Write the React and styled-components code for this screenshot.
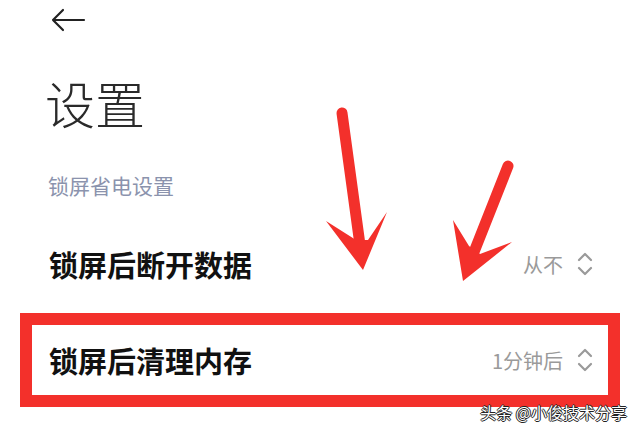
import React from 'react';
import styled, { createGlobalStyle } from 'styled-components';

const GlobalStyle = createGlobalStyle`
  body {
    margin: 0;
    background: #ffffff;
    font-family: "Noto Sans CJK SC", "Noto Sans", sans-serif;
  }
`;

const Page = styled.div`
  position: relative;
  width: 640px;
  height: 433px;
  overflow: hidden;
  background: #ffffff;
  display: flex;
  flex-direction: column;
`;

const TopBar = styled.div`
  height: 40px;
  display: flex;
  align-items: center;
  padding-left: 50px;
  color: #222;
`;

const Title = styled.h1`
  margin: 37px 0 0 45px;
  font-size: 50px;
  line-height: 50px;
  font-weight: 300;
  color: #2a2a2a;
`;

const SectionLabel = styled.div`
  margin: 48px 0 0 48px;
  font-size: 21px;
  line-height: 21px;
  color: #8b93ad;
`;

const List = styled.div`
  margin-top: 21px;
  padding: 0 20px;
  display: flex;
  flex-direction: column;
  gap: 2px;
`;

const Row = styled.div`
  height: 70px;
  display: flex;
  align-items: center;
  padding: 0 15px 0 17px;
  border: 12px solid ${p => (p.$marked ? '#f3302b' : 'transparent')};
`;

const Label = styled.div`
  flex: 1;
  font-size: 29px;
  font-weight: 700;
  color: #111;
`;

const Value = styled.div`
  display: flex;
  align-items: center;
  gap: 14px;
  font-size: 20px;
  color: #9a9a9a;
`;

const Overlay = styled.svg`
  position: absolute;
  left: 0;
  top: 0;
  pointer-events: none;
`;

const Watermark = styled.div`
  position: absolute;
  right: 13px;
  bottom: 9px;
  font-size: 16px;
  color: #ffffff;
  text-shadow: -1px 0 #222, 1px 0 #222, 0 -1px #222, 0 1px #222;
`;

function BackArrow() {
  return (
    <svg width="36" height="24" viewBox="0 0 36 24" fill="none" stroke="#222" strokeWidth="2.2" strokeLinecap="round" strokeLinejoin="round">
      <path d="M34 12H3M13 2L3 12l10 10" />
    </svg>
  );
}

function UpDown() {
  return (
    <svg width="16" height="26" viewBox="0 0 16 26" fill="none" stroke="#9a9a9a" strokeWidth="2.2" strokeLinecap="round" strokeLinejoin="round">
      <path d="M2 9l6-6 6 6M2 17l6 6 6-6" />
    </svg>
  );
}

const rows = [
  { label: '锁屏后断开数据', value: '从不' },
  { label: '锁屏后清理内存', value: '1分钟后', marked: true },
];

export default function App() {
  return (
    <Page>
      <GlobalStyle />
      <TopBar>
        <BackArrow />
      </TopBar>
      <Title>设置</Title>
      <SectionLabel>锁屏省电设置</SectionLabel>
      <List>
        {rows.map(r => (
          <Row key={r.label} $marked={r.marked}>
            <Label>{r.label}</Label>
            <Value>
              {r.value}
              <UpDown />
            </Value>
          </Row>
        ))}
      </List>

      {/* red pointer arrows */}
      <Overlay width="640" height="433">
        <g fill="#f3302b" stroke="#f3302b" strokeLinecap="round">
          <line x1="342" y1="113" x2="360" y2="245" strokeWidth="11" />
          <path d="M363 270L326 221L356 240L368 240L387 212Z" stroke="none" />
          <line x1="508" y1="166" x2="474" y2="252" strokeWidth="11" />
          <path d="M463 281L453 220L469 246L480 254L512 242Z" stroke="none" />
        </g>
      </Overlay>

      <Watermark>头条 @小俊技术分享</Watermark>
    </Page>
  );
}
